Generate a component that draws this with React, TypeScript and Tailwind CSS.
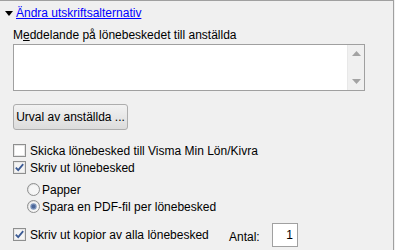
import React from "react";

const CheckBox: React.FC<{ checked?: boolean }> = ({ checked }) => (
  <svg width="13" height="13" viewBox="0 0 13 13" className="shrink-0">
    <rect x="0.5" y="0.5" width="12" height="12" fill="#ffffff" stroke="#8e8f8f" />
    <rect x="1.5" y="1.5" width="10" height="10" fill={checked ? "#f4f4f4" : "#ffffff"} stroke="#e6e6e6" />
    {checked && (
      <path d="M2.8 6.6 L5.2 9.2 L10.2 3.2" fill="none" stroke="#3b5a94" strokeWidth="1.8" />
    )}
  </svg>
);

const Radio: React.FC<{ checked?: boolean }> = ({ checked }) => (
  <svg width="13" height="13" viewBox="0 0 13 13" className="shrink-0">
    <defs>
      <linearGradient id="rg" x1="0" y1="0" x2="1" y2="1">
        <stop offset="0" stopColor="#d8d8d8" />
        <stop offset="1" stopColor="#ffffff" />
      </linearGradient>
    </defs>
    <circle cx="6.5" cy="6.5" r="6" fill="url(#rg)" stroke="#8e8f8f" />
    <circle cx="6.5" cy="6.5" r="4.5" fill="#f6f6f6" />
    {checked && (
      <>
        <circle cx="6.5" cy="6.5" r="3.2" fill="#7f97bd" />
        <circle cx="6.5" cy="6.5" r="2" fill="#4c6799" />
      </>
    )}
  </svg>
);

export default function App() {
  return (
    <div
      className="w-[395px] h-[250px] bg-[#f0f0f0] text-[12px] leading-[14px] text-black overflow-hidden"
      style={{ fontFamily: '"Liberation Sans", Arial, sans-serif' }}
    >
      <div className="w-[394px] h-[250px] border-t border-r border-[#a0a0a0] flex flex-col">
        {/* header */}
        <div className="mt-[5px] h-[14px] pl-[5px] flex items-center gap-[3px]">
          <svg width="8" height="5" viewBox="0 0 8 5">
            <path d="M0 0 H8 L4 5 Z" fill="#000" />
          </svg>
          <span className="text-[#0000ff] underline">Ändra utskriftsalternativ</span>
        </div>

        <div className="mt-[8px] h-[14px] pl-[13px]">
          M<span className="underline">e</span>ddelande på lönebeskedet till anställda
        </div>

        {/* message box */}
        <div className="mt-[2px] ml-[13px] w-[352px] h-[47px] bg-white border border-[#a0a0a0] flex justify-end">
          <div className="w-[17px] h-full bg-[#f0f0f0] border-l border-[#e8e8e8] flex flex-col items-center justify-between py-[6px]">
            <svg width="9" height="5" viewBox="0 0 9 5">
              <path d="M0 5 L4.5 0 L9 5 Z" fill="#a3a3a3" />
            </svg>
            <svg width="9" height="5" viewBox="0 0 9 5">
              <path d="M0 0 H9 L4.5 5 Z" fill="#a3a3a3" />
            </svg>
          </div>
        </div>

        <button className="mt-[13px] ml-[13px] w-[115px] h-[26px] rounded-[3px] border border-[#adadad] bg-gradient-to-b from-[#f2f2f2] to-[#dcdcdc] text-[12px] text-black">
          Urval av anställda ...
        </button>

        <div className="mt-[12px] ml-[13px] h-[17px] flex items-center gap-[4px]">
          <CheckBox />
          <span>Skicka lönebesked till Visma Min Lön/Kivra</span>
        </div>
        <div className="ml-[13px] h-[17px] flex items-center gap-[4px]">
          <CheckBox checked />
          <span>Skriv ut lönebesked</span>
        </div>

        <div className="mt-[5px] ml-[27px] h-[17px] flex items-center gap-[2px]">
          <Radio />
          <span>Papper</span>
        </div>
        <div className="ml-[27px] h-[17px] flex items-center gap-[2px]">
          <Radio checked />
          <span>Spara en PDF-fil per lönebesked</span>
        </div>

        <div className="mt-[11px] ml-[13px] h-[17px] flex items-center">
          <CheckBox checked />
          <span className="ml-[4px] w-[199px]">Skriv ut kopior av alla lönebesked</span>
          <span className="w-[43px] pt-[5px]">Antal:</span>
          <div className="w-[26px] h-[24px] shrink-0 bg-white border border-[#a0a0a0] flex items-center justify-end pr-[4px]">
            1
          </div>
        </div>
      </div>
    </div>
  );
}
